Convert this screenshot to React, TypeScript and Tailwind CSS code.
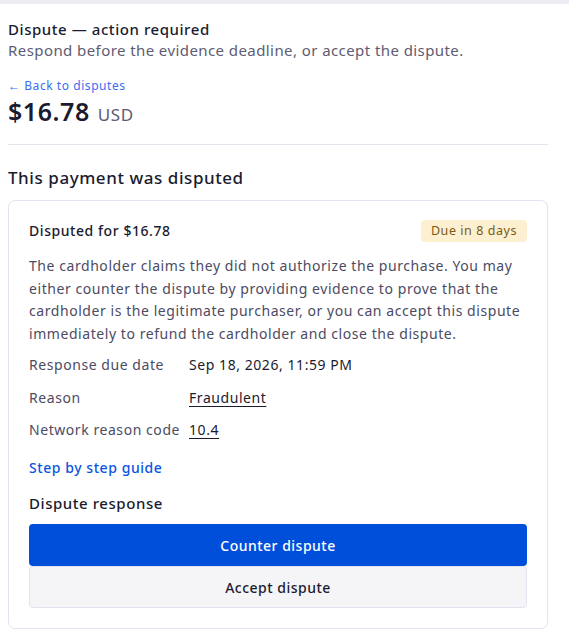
import React from "react";

const rows = [
  { label: "Response due date", value: "Sep 18, 2026, 11:59 PM", link: false },
  { label: "Reason", value: "Fraudulent", link: true },
  { label: "Network reason code", value: "10.4", link: true },
];

export default function App() {
  return (
    <div
      className="min-h-[634px] w-[569px] bg-white tracking-[0.035em] text-[#1b1b2f]"
      style={{ fontFamily: '"Noto Sans", "Open Sans", sans-serif' }}
    >
      {/* top strip */}
      <div className="h-[4px] bg-[#ececf2]" />

      <div className="w-[548px] pl-2">
        {/* header */}
        <div className="pt-[14px]">
          <h1 className="text-[15px] font-medium leading-[22px]">Dispute — action required</h1>
          <p className="text-[15px] leading-[20px] tracking-[0.028em] text-[#5d5c72]">
            Respond before the evidence deadline, or accept the dispute.
          </p>
        </div>

        <a href="#" className="mt-[18px] block text-[12px] leading-[16px] text-[#3b6df2]">
          ← Back to disputes
        </a>
        <div className="flex items-baseline gap-[8px]">
          <span className="text-[25px] font-semibold leading-[34px] text-[#1b1b2f]">$16.78</span>
          <span className="text-[17px] text-[#5d5c72]">USD</span>
        </div>

        <div className="mt-[16px] border-t border-[#e4e3ec]" />

        <h2 className="mt-[21px] text-[17px] font-medium leading-[24px]">This payment was disputed</h2>

        {/* card */}
        <div className="mt-[10px] rounded-[7px] border border-[#e4e2ef] px-[20px] pb-[20px] pt-[19px]">
          <div className="flex h-[22px] items-center justify-between">
            <span className="text-[14px] font-medium leading-[22px]">Disputed for $16.78</span>
            <span className="rounded-[4px] bg-[#fcf0d0] px-[10px] text-[12.5px] leading-[22px] text-[#7a5b16]">
              Due in 8 days
            </span>
          </div>

          <p className="mt-[13px] text-[14px] leading-[22.5px] text-[#4c4b63]">
            The cardholder claims they did not authorize the purchase. You may either counter the dispute by
            providing evidence to prove that the cardholder is the legitimate purchaser, or you can accept this
            dispute immediately to refund the cardholder and close the dispute.
          </p>

          <div className="mt-[9px] flex flex-col gap-[10.5px]">
            {rows.map((r) => (
              <div key={r.label} className="flex text-[14px] leading-[22px]">
                <span className="w-[160px] shrink-0 text-[#4c4b63]">{r.label}</span>
                <span className={r.link ? "text-[#1b1b2f] underline underline-offset-[3px]" : "text-[#1b1b2f]"}>
                  {r.value}
                </span>
              </div>
            ))}
          </div>

          <a href="#" className="mt-[16px] block text-[14px] font-medium leading-[22px] text-[#0b55e0]">
            Step by step guide
          </a>

          <h3 className="mt-[13px] text-[15px] font-medium leading-[22px]">Dispute response</h3>

          <div className="mt-[10px] flex flex-col">
            <button className="h-[42px] w-full rounded-[4px] bg-[#004fdb] text-[14px] font-medium tracking-[0.035em] text-white">
              Counter dispute
            </button>
            <button className="h-[42px] w-full rounded-[4px] border border-[#e4e2ef] bg-[#f5f5f8] text-[14px] font-medium tracking-[0.035em] text-[#1b1b2f]">
              Accept dispute
            </button>
          </div>
        </div>
      </div>
    </div>
  );
}
